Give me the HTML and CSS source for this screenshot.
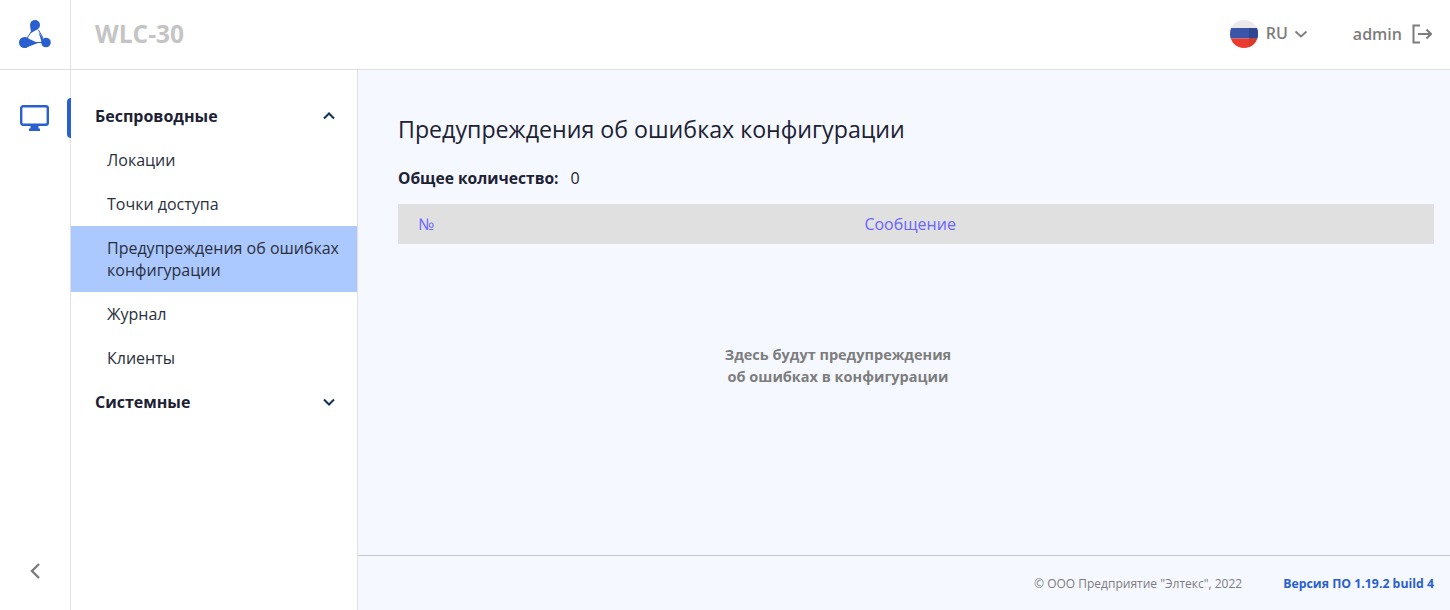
FILE: index.html
```html
<!DOCTYPE html>
<html lang="ru">
<head>
<meta charset="utf-8">
<title>WLC-30</title>
<link rel="stylesheet" href="styles.css">
</head>
<body>
<header class="topbar">
  <div class="logo-cell">
    <svg class="logo" width="32" height="29" viewBox="0 0 32 29">
      <path d="M12 12 L7 20 M9 22.500 H23 M24 18 L19.500 10" fill="none" stroke="#2a5fcf" stroke-width="1"/>
      <circle cx="16" cy="5" r="5" fill="#2a5fcf"/>
      <path d="M11.300 6.500 L12 13 L19 9 Z" fill="#2a5fcf"/>
      <circle cx="5.500" cy="22.500" r="5.500" fill="#2a5fcf"/>
      <path d="M6 17 L19 23 L6 28 Z" fill="#2a5fcf"/>
      <circle cx="27" cy="22.500" r="4.800" fill="#2a5fcf"/>
      <path d="M24 18.500 L19.500 12 L24 26.500 Z" fill="#2a5fcf"/>
    </svg>
  </div>
  <div class="brand">WLC-30</div>
  <div class="lang">
    <svg class="flag" width="28" height="28" viewBox="0 0 28 28">
      <defs><clipPath id="fc"><circle cx="14" cy="14" r="14"/></clipPath></defs>
      <g clip-path="url(#fc)">
        <rect width="28" height="8" fill="#eaeaea"/>
        <rect y="8" width="28" height="10.500" fill="#3a55a8"/>
        <rect y="18.500" width="28" height="9.500" fill="#eb3b30"/>
        <rect x="19" y="8" width="9" height="10.500" fill="#2f4690"/>
        <rect x="19" y="18.500" width="9" height="9.500" fill="#d93a2c"/>
      </g>
    </svg>
    <span class="lang-code">RU</span>
    <svg class="lang-caret" width="14" height="14" viewBox="0 0 14 14"><path d="M1.500 4.500 L7 9.500 L12.500 4.500" fill="none" stroke="#7d7d7d" stroke-width="1.800"/></svg>
  </div>
  <div class="user">
    <span class="user-name">admin</span>
    <svg class="logout" width="20" height="20" viewBox="0 0 20 20"><path d="M8 1.500 H1.500 V18.500 H8 M6 10 H19 M14.500 5.500 L19 10 L14.500 14.500" fill="none" stroke="#7d7d7d" stroke-width="2"/></svg>
  </div>
</header>
<div class="body">
  <aside class="rail">
    <div class="rail-item">
      <svg width="29" height="26" viewBox="0 0 29 26"><rect x="1.200" y="1.200" width="26.600" height="18.600" rx="2" fill="none" stroke="#2a5fcf" stroke-width="2.400"/><path d="M10.500 21 H18.500 V23.500 H20 V26 H9 V23.500 H10.500Z" fill="#2a5fcf"/></svg>
    </div>
    <div class="rail-back">
      <svg width="12" height="18" viewBox="0 0 12 18"><path d="M10 2 L3 9 L10 16" fill="none" stroke="#7d7d7d" stroke-width="2.400"/></svg>
    </div>
  </aside>
  <nav class="sidebar">
    <div class="group"><span>Беспроводные</span><svg width="14" height="10" viewBox="0 0 14 10"><path d="M2 7.500 L7 2.500 L12 7.500" fill="none" stroke="#0e3356" stroke-width="2"/></svg></div>
    <a class="item">Локации</a>
    <a class="item">Точки доступа</a>
    <a class="item active">Предупреждения об ошибках конфигурации</a>
    <a class="item">Журнал</a>
    <a class="item">Клиенты</a>
    <div class="group"><span>Системные</span><svg width="14" height="10" viewBox="0 0 14 10"><path d="M2 2.500 L7 7.500 L12 2.500" fill="none" stroke="#0e3356" stroke-width="2"/></svg></div>
  </nav>
  <main class="main">
    <div class="content">
      <h1 class="title">Предупреждения об ошибках конфигурации</h1>
      <div class="total"><b>Общее количество:</b><span>0</span></div>
      <div class="thead"><span class="col-num">№</span><span class="col-msg">Сообщение</span></div>
      <div class="empty">Здесь будут предупреждения<br>об ошибках в конфигурации</div>
    </div>
    <footer class="footer">
      <span class="copy">© ООО Предприятие "Элтекс", 2022</span>
      <span class="version">Версия ПО 1.19.2 build 4</span>
    </footer>
  </main>
</div>
</body>
</html>
```
FILE: styles.css
```css
* { box-sizing: border-box; }
html, body { margin: 0; height: 100%; }
body {
  font-family: "Open Sans", "Noto Sans", sans-serif;
  font-size: 16px;
  color: #1c2233;
  background: #fff;
  display: flex;
  flex-direction: column;
  height: 610px;
  overflow: hidden;
}
.topbar {
  height: 70px;
  flex: none;
  display: flex;
  align-items: center;
  border-bottom: 1px solid #e0e0e0;
  background: #fff;
}
.logo-cell {
  width: 71px;
  height: 69px;
  flex: none;
  border-right: 1px solid #e0e0e0;
  display: flex;
  align-items: center;
  justify-content: center;
  padding-right: 1px;
}
.brand {
  margin-left: 24px;
  font-size: 24.5px;
  font-weight: 700;
  color: #c4c4c4;
  flex: 1;
  margin-top: -2px;
}
.lang { display: flex; align-items: center; margin-top: -1px; }
.lang-code { margin-left: 8px; font-weight: 600; font-size: 16px; color: #7d7d7d; margin-top: -2px; }
.lang-caret { margin-left: 6px; }
.user { display: flex; align-items: center; margin-left: 45px; margin-right: 18px; margin-top: -2px; }
.user-name { font-weight: 600; font-size: 16px; color: #7d7d7d; }
.logout { margin-left: 10px; }
.body { flex: 1; display: flex; min-height: 0; }
.rail {
  width: 71px;
  flex: none;
  border-right: 1px solid #e0e0e0;
  display: flex;
  flex-direction: column;
  justify-content: space-between;
}
.rail-item {
  margin-top: 28px;
  height: 40px;
  display: flex;
  align-items: center;
  padding-left: 20px;
  position: relative;
}
.rail-item::after {
  content: "";
  position: absolute;
  right: -1px;
  top: 0;
  width: 4px;
  height: 40px;
  background: #2a5fcf;
  border-radius: 4px 0 0 4px;
}
.rail-back { height: 18px; margin-bottom: 30px; padding-left: 29px; }
.sidebar {
  width: 287px;
  flex: none;
  border-right: 1px solid #e0e0e0;
  padding-top: 24px;
}
.group {
  height: 44px;
  display: flex;
  align-items: center;
  justify-content: space-between;
  padding: 0 21px 0 24px;
  font-weight: 700;
  font-size: 16px;
  color: #1c2233;
}
.item {
  display: block;
  padding: 11px 12px 11px 36px;
  line-height: 22px;
  font-size: 16px;
  color: #2a2f3d;
}
.item.active { background: #abc8ff; }
.main {
  flex: 1;
  min-width: 0;
  background: #f5f8ff;
  display: flex;
  flex-direction: column;
}
.content { flex: 1; padding: 0 16px 0 40px; }
.title {
  margin: 43px 0 0;
  font-size: 23.2px;
  font-weight: 400;
  line-height: 33px;
  color: #1c2233;
}
.total { margin-top: 21px; line-height: 22px; display: flex; gap: 12px; }
.total b { font-weight: 700; font-size: 15.6px; }
.thead {
  margin-top: 15px;
  height: 40px;
  background: #e0e0e0;
  color: #6a64ff;
  display: flex;
  align-items: center;
  position: relative;
  padding-left: 20px;
}
.col-msg { flex: 1; text-align: center; padding-right: 48px; }
.empty {
  margin-top: 100px;
  padding-right: 156px;
  text-align: center;
  font-weight: 700;
  font-size: 14.5px;
  line-height: 22px;
  color: #7d7d7d;
}
.footer {
  height: 55px;
  flex: none;
  border-top: 1px solid #c8c8c8;
  display: flex;
  align-items: center;
  justify-content: flex-end;
  padding-right: 16px;
  font-size: 12px;
}
.copy { color: #7d7d7d; }
.version { margin-left: 41px; font-weight: 700; font-size: 12.3px; color: #2a5fcf; }
```
